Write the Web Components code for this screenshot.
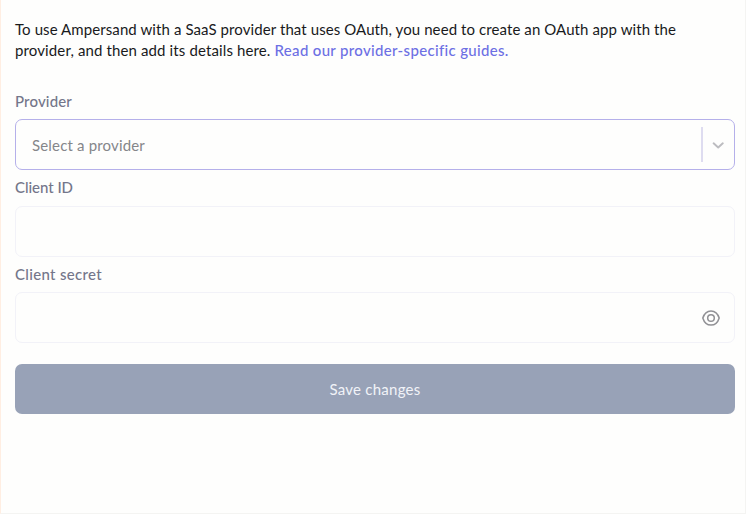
<!DOCTYPE html>
<html lang="en">
<head>
<meta charset="utf-8">
<title>Provider app settings</title>
<style>
html, body { margin: 0; height: 100%; background: #fefefd; }
body { font-family: Lato, "Open Sans", sans-serif; font-size: 15px; overflow: hidden; }
</style>
</head>
<body>
<provider-form></provider-form>
<script>
/* One line of text, tracked out to the width given in its attribute. */
class FitText extends HTMLElement {
  connectedCallback() {
    this.attachShadow({ mode: "open" }).innerHTML = `<style>:host { display: block; } span { display: inline-block; white-space: pre; }</style><span><slot></slot></span>`;
    const span = this.shadowRoot.querySelector("span");
    const width = Number(this.getAttribute("width"));
    const natural = span.getBoundingClientRect().width;
    span.style.letterSpacing = (width - natural) / this.textContent.length + "px";
  }
}
class FormField extends HTMLElement {
  connectedCallback() {
    this.attachShadow({ mode: "open" }).innerHTML = `
      <style>
        :host { display: block; height: 86.4px; }
        .label { height: 20px; line-height: 20px; margin-bottom: 8.3px; color: #74768a; font-weight: 500; }
        .box { box-sizing: border-box; height: 51px; border: 1px solid #f2f2f8; border-radius: 7px; display: flex; align-items: center; padding: 0 15px 0 16px; color: #85868a; }
        :host([active]) .box { border-color: #b5b0ea; padding-right: 10px; }
        .end { margin-left: auto; display: flex; align-items: center; }
      </style>
      <div class="label"><fit-text width="${this.getAttribute("label-width")}">${this.getAttribute("label")}</fit-text></div>
      <div class="box"><slot></slot><div class="end"><slot name="end"></slot></div></div>`;
  }
}
class SelectArrow extends HTMLElement {
  connectedCallback() {
    this.attachShadow({ mode: "open" }).innerHTML = `
      <style>
        :host { display: flex; align-items: center; gap: 9px; }
        i { width: 2px; height: 35px; background: #dedcf0; }
        svg { display: block; }
      </style>
      <i></i><svg width="12" height="8" viewBox="0 0 12 8" fill="none" stroke="#bcbcc0" stroke-width="1.9" stroke-linecap="round" stroke-linejoin="round"><path d="M1.600 2.300L6.200 6.500L10.800 2.300"/></svg>`;
  }
}
class EyeIcon extends HTMLElement {
  connectedCallback() {
    this.attachShadow({ mode: "open" }).innerHTML = `
      <style>:host, svg { display: block; } :host { margin-right: -1px; }</style>
      <svg width="18" height="16" viewBox="0 0 18 16" fill="none" stroke="#919195" stroke-width="1.5"><path d="M.8 8C2.300 3.200 5.400 .9 9 .9S15.700 3.200 17.200 8C15.700 12.800 12.600 15.100 9 15.100S2.300 12.800 .8 8Z"/><circle cx="9" cy="8" r="3.300"/></svg>`;
  }
}
class SaveButton extends HTMLElement {
  connectedCallback() {
    this.attachShadow({ mode: "open" }).innerHTML = `
      <style>
        :host { display: block; }
        button { display: flex; width: 100%; height: 50px; border: 0; border-radius: 7px; padding: 0; align-items: center; justify-content: center; background: #98a2b7; color: #f1f3f8; font: inherit; }
      </style>
      <button type="button"><slot></slot></button>`;
  }
}
class ProviderForm extends HTMLElement {
  connectedCallback() {
    this.attachShadow({ mode: "open" }).innerHTML = `
      <style>
        :host { display: block; box-sizing: border-box; width: 746px; height: 514px; padding: 19px 10px 0 14px; border: solid #f4f4f2; border-width: 0 1px 1px 0; border-left: 1px solid #ffeee2; }
        .intro { height: 43px; margin-bottom: 29px; line-height: 21px; color: #191a1c; }
        .row { display: flex; height: 21px; }
        a { color: #6d70e4; font-weight: 500; }
        save-button { margin-top: 14px; }
      </style>
      <div class="intro">
        <div class="row"><fit-text width="661">To use Ampersand with a SaaS provider that uses OAuth, you need to create an OAuth app with the</fit-text></div>
        <div class="row"><fit-text width="259.500">provider, and then add its details here. </fit-text><a><fit-text width="234">Read our provider-specific guides.</fit-text></a></div>
      </div>
      <form-field label="Provider" label-width="57" active><fit-text width="113">Select a provider</fit-text><select-arrow slot="end"></select-arrow></form-field>
      <form-field label="Client ID" label-width="58"></form-field>
      <form-field label="Client secret" label-width="87"><eye-icon slot="end"></eye-icon></form-field>
      <save-button><fit-text width="91">Save changes</fit-text></save-button>`;
  }
}
customElements.define("fit-text", FitText);
customElements.define("form-field", FormField);
customElements.define("select-arrow", SelectArrow);
customElements.define("eye-icon", EyeIcon);
customElements.define("save-button", SaveButton);
customElements.define("provider-form", ProviderForm);
</script>
</body>
</html>
